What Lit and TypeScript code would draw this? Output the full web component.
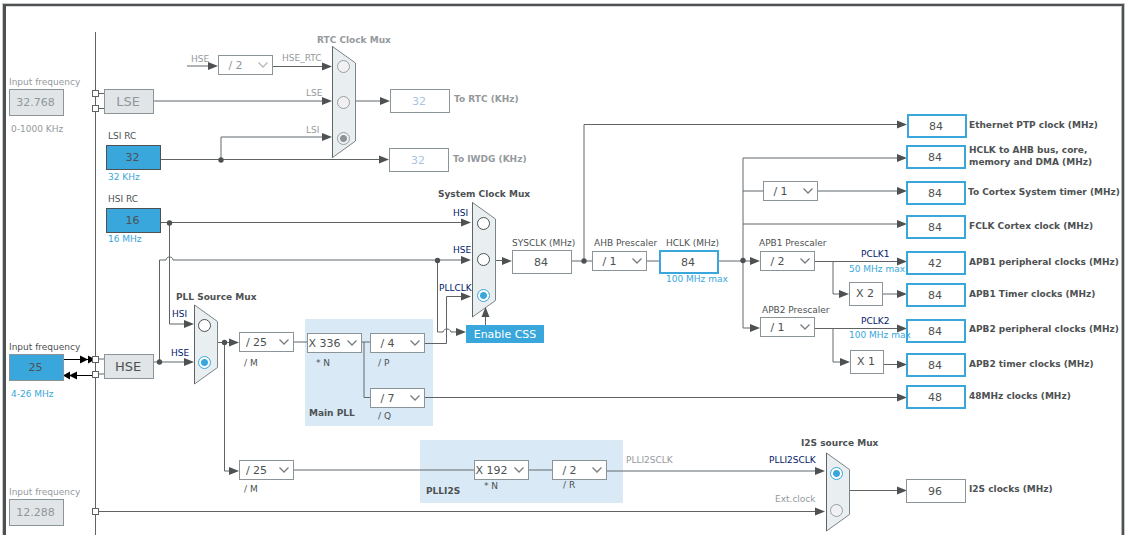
import { LitElement, html, svg, css, nothing } from "lit";
import { customElement } from "lit/decorators.js";
import { styleMap } from "lit/directives/style-map.js";

type Point = [number, number];

interface Field {
  id: string;
  at: Point;
  value: string;
  kind: string;
  off?: boolean;
}

interface Divider {
  id: string;
  at: Point;
  value: string;
  name?: string;
  off?: boolean;
}

interface Caption {
  at: Point;
  text: string;
  kind?: string;
  target?: string;
}

interface Mux {
  name: string;
  x: number;
  top: number;
  bottom: number;
  inputs: { id: string; at: Point; on?: boolean; off?: boolean }[];
}

interface Wire {
  d: string;
  soft?: boolean;
  tip?: Point;
}

const fields: Field[] = [
  { id: "lse-in", at: [9, 89], value: "32.768", kind: "source", off: true },
  { id: "hse-in", at: [9, 354], value: "25", kind: "source live" },
  { id: "i2s-in", at: [9, 499], value: "12.288", kind: "source", off: true },
  { id: "lsi", at: [106, 145], value: "32", kind: "rc" },
  { id: "hsi", at: [106, 208], value: "16", kind: "rc" },
  { id: "rtc", at: [390, 89], value: "32", kind: "plain", off: true },
  { id: "iwdg", at: [389, 148], value: "32", kind: "plain", off: true },
  { id: "sysclk", at: [512, 250], value: "84", kind: "plain" },
  { id: "hclk", at: [659, 250], value: "84", kind: "target" },
  { id: "eth", at: [907, 114], value: "84", kind: "target" },
  { id: "ahb-bus", at: [906, 145], value: "84", kind: "target" },
  { id: "cortex", at: [906, 181], value: "84", kind: "target" },
  { id: "fclk", at: [906, 215], value: "84", kind: "target" },
  { id: "apb1-p", at: [906, 251], value: "42", kind: "target" },
  { id: "apb1-t", at: [906, 283], value: "84", kind: "target" },
  { id: "apb2-p", at: [906, 319], value: "84", kind: "target" },
  { id: "apb2-t", at: [906, 353], value: "84", kind: "target" },
  { id: "usb48", at: [906, 385], value: "48", kind: "target" },
  { id: "i2s", at: [906, 479], value: "96", kind: "plain" },
];

const dividers: Divider[] = [
  { id: "rtc-div", at: [218, 55], value: "/ 2", name: "HSE RTC divider", off: true },
  { id: "pll-m", at: [239, 332], value: "/ 25" },
  { id: "pll-n", at: [307, 333], value: "X 336" },
  { id: "pll-p", at: [370, 333], value: "/ 4" },
  { id: "pll-q", at: [370, 388], value: "/ 7" },
  { id: "i2s-m", at: [239, 460], value: "/ 25" },
  { id: "i2s-n", at: [474, 460], value: "X 192" },
  { id: "i2s-r", at: [552, 460], value: "/ 2" },
  { id: "ahb-div", at: [592, 251], value: "/ 1" },
  { id: "cortex-div", at: [763, 181], value: "/ 1", name: "Cortex prescaler" },
  { id: "apb1-div", at: [760, 251], value: "/ 2" },
  { id: "apb2-div", at: [760, 317], value: "/ 1" },
];

const captions: Caption[] = [
  { at: [9, 76], text: "Input frequency", kind: "faint", target: "lse-in" },
  { at: [11, 123], text: "0-1000 KHz", kind: "faint" },
  { at: [9, 341], text: "Input frequency", target: "hse-in" },
  { at: [11, 388], text: "4-26 MHz", kind: "hint" },
  { at: [9, 486], text: "Input frequency", kind: "faint", target: "i2s-in" },
  { at: [108, 130], text: "LSI RC", target: "lsi" },
  { at: [108, 171], text: "32 KHz", kind: "hint" },
  { at: [108, 193], text: "HSI RC", target: "hsi" },
  { at: [108, 233], text: "16 MHz", kind: "hint" },
  { at: [191, 53], text: "HSE", kind: "faint" },
  { at: [282, 52], text: "HSE_RTC", kind: "faint", target: "rtc-hse" },
  { at: [306, 87], text: "LSE", kind: "faint", target: "rtc-lse" },
  { at: [306, 124], text: "LSI", kind: "faint", target: "rtc-lsi" },
  { at: [317, 34], text: "RTC Clock Mux", kind: "bold faint" },
  { at: [454, 93], text: "To RTC (KHz)", kind: "bold faint", target: "rtc" },
  { at: [453, 153], text: "To IWDG (KHz)", kind: "bold faint", target: "iwdg" },
  { at: [176, 291], text: "PLL Source Mux", kind: "bold" },
  { at: [172, 308], text: "HSI", kind: "signal", target: "pll-hsi" },
  { at: [171, 347], text: "HSE", kind: "signal", target: "pll-hse" },
  { at: [244, 357], text: "/ M", target: "pll-m" },
  { at: [316, 357], text: "* N", target: "pll-n" },
  { at: [378, 357], text: "/ P", target: "pll-p" },
  { at: [378, 410], text: "/ Q", target: "pll-q" },
  { at: [309, 407], text: "Main PLL", kind: "bold" },
  { at: [244, 483], text: "/ M", target: "i2s-m" },
  { at: [484, 480], text: "* N", target: "i2s-n" },
  { at: [563, 479], text: "/ R", target: "i2s-r" },
  { at: [426, 485], text: "PLLI2S", kind: "bold" },
  { at: [626, 454], text: "PLLI2SCLK", kind: "faint" },
  { at: [769, 454], text: "PLLI2SCLK", kind: "signal", target: "i2s-pll" },
  { at: [775, 493], text: "Ext.clock", kind: "faint", target: "i2s-ext" },
  { at: [801, 437], text: "I2S source Mux", kind: "bold" },
  { at: [438, 188], text: "System Clock Mux", kind: "bold" },
  { at: [453, 207], text: "HSI", kind: "signal", target: "sys-hsi" },
  { at: [453, 244], text: "HSE", kind: "signal", target: "sys-hse" },
  { at: [439, 282], text: "PLLCLK", kind: "signal", target: "sys-pll" },
  { at: [512, 237], text: "SYSCLK (MHz)", target: "sysclk" },
  { at: [594, 237], text: "AHB Prescaler", target: "ahb-div" },
  { at: [666, 237], text: "HCLK (MHz)", target: "hclk" },
  { at: [666, 273], text: "100 MHz max", kind: "hint" },
  { at: [759, 237], text: "APB1 Prescaler", target: "apb1-div" },
  { at: [762, 304], text: "APB2 Prescaler", target: "apb2-div" },
  { at: [861, 248], text: "PCLK1", kind: "signal" },
  { at: [849, 263], text: "50 MHz max", kind: "hint" },
  { at: [861, 315], text: "PCLK2", kind: "signal" },
  { at: [849, 329], text: "100 MHz max", kind: "hint" },
  { at: [969, 119], text: "Ethernet PTP clock (MHz)", kind: "bold", target: "eth" },
  { at: [969, 144], text: "HCLK to AHB bus, core,\nmemory and DMA (MHz)", kind: "bold", target: "ahb-bus" },
  { at: [968, 186], text: "To Cortex System timer (MHz)", kind: "bold", target: "cortex" },
  { at: [969, 220], text: "FCLK Cortex clock (MHz)", kind: "bold", target: "fclk" },
  { at: [969, 256], text: "APB1 peripheral clocks (MHz)", kind: "bold", target: "apb1-p" },
  { at: [969, 288], text: "APB1 Timer clocks (MHz)", kind: "bold", target: "apb1-t" },
  { at: [969, 323], text: "APB2 peripheral clocks (MHz)", kind: "bold", target: "apb2-p" },
  { at: [969, 358], text: "APB2 timer clocks (MHz)", kind: "bold", target: "apb2-t" },
  { at: [969, 390], text: "48MHz clocks (MHz)", kind: "bold", target: "usb48" },
  { at: [969, 483], text: "I2S clocks (MHz)", kind: "bold", target: "i2s" },
];

const muxes: Mux[] = [
  {
    name: "rtc-mux", x: 332.5, top: 46.5, bottom: 157.5,
    inputs: [
      { id: "rtc-hse", at: [343, 66], off: true },
      { id: "rtc-lse", at: [343, 102], off: true },
      { id: "rtc-lsi", at: [343, 138], on: true, off: true },
    ],
  },
  {
    name: "pll-mux", x: 194.5, top: 305, bottom: 384,
    inputs: [
      { id: "pll-hsi", at: [204, 325] },
      { id: "pll-hse", at: [204, 362], on: true },
    ],
  },
  {
    name: "sys-mux", x: 472.5, top: 202.5, bottom: 317,
    inputs: [
      { id: "sys-hsi", at: [483, 223] },
      { id: "sys-hse", at: [483, 259] },
      { id: "sys-pll", at: [483, 295], on: true },
    ],
  },
  {
    name: "i2s-mux", x: 826.5, top: 453, bottom: 531,
    inputs: [
      { id: "i2s-pll", at: [836, 473], on: true },
      { id: "i2s-ext", at: [836, 510], off: true },
    ],
  },
];

const wires: Wire[] = [
  { d: "M95.5 32V2000" },
  { d: "M98 93.5H104M98 108.5H104" },
  { d: "M98 359H104M98 374H104", soft: true },
  { d: "M187 66H210", soft: true, tip: [218, 66] },
  { d: "M273 66.5H324", tip: [332, 66.5] },
  { d: "M154 101H324", soft: true, tip: [332, 101] },
  { d: "M221 159V137H324", soft: true, tip: [332, 137] },
  { d: "M161 159.5H382", tip: [389, 159.5] },
  { d: "M356 101H382", soft: true, tip: [390, 101] },
  { d: "M161 222.5H464", tip: [471, 222.5] },
  { d: "M169.5 223V324H186", tip: [194, 324] },
  { d: "M154 362H186", soft: true, tip: [194, 362] },
  { d: "M159.5 362V260" },
  { d: "M159.5 260H166C166 256 173 256 173 260H464", soft: true, tip: [471, 260] },
  { d: "M437.5 260V332H443C444 328 450 328 451 332H457", tip: [466, 332] },
  { d: "M218 342.5H231", tip: [239, 342.5] },
  { d: "M224.5 342V471H231", tip: [239, 471] },
  { d: "M294 342H307M362 342H370M364 342V397.5H370", soft: true },
  { d: "M425 343.5H446.5V296.5H464", tip: [471, 296.5] },
  { d: "M425 397.5H899", tip: [907, 397.5] },
  { d: "M294 470H474M529 470H552M607 471H818", soft: true, tip: [825, 471] },
  { d: "M98 511.5H818", tip: [825, 511.5] },
  { d: "M850 490.5H899", tip: [907, 490.5] },
  { d: "M496 260.5H505", tip: [512, 261] },
  { d: "M572 261H592M584 261V124.5M647 261H659M719 261H752", soft: true, tip: [760, 261] },
  { d: "M584 124.5H899", tip: [907, 124.5] },
  { d: "M743 158H899", soft: true, tip: [907, 158] },
  { d: "M743 191H763M818 191H899", soft: true, tip: [907, 191] },
  { d: "M743 224H899", soft: true, tip: [907, 224] },
  { d: "M743 158V328H752", soft: true, tip: [760, 328] },
  { d: "M815 261.5H899", tip: [907, 261.5] },
  { d: "M833 261V294H841", soft: true, tip: [849, 294] },
  { d: "M883 294H899", soft: true, tip: [907, 294] },
  { d: "M815 328.5H899", tip: [907, 328.5] },
  { d: "M833 328V362H842", soft: true, tip: [850, 362] },
  { d: "M884 364.5H899", tip: [907, 364.5] },
];

const joints: Point[] = [
  [221, 160], [169.5, 223], [159.5, 362], [224.5, 342.5],
  [437.5, 260.5], [584, 261], [743, 260.5],
];

const pins: number[] = [90.5, 105.5, 356.5, 371.5, 508.5];

const place = ([x, y]: Point) => styleMap({ left: `${x}px`, top: `${y}px` });

@customElement("app-root")
export class AppRoot extends LitElement {
  static styles = css`
    :host {
      display: block;
      font-family: "DejaVu Sans", sans-serif;
      font-size: 9px;
      line-height: 12px;
      color: #4d5152;
    }
    .page {
      position: relative;
      box-sizing: border-box;
      min-height: 100vh;
      display: flex;
      padding: 4px 3px 0;
      overflow: hidden;
      background: #fff;
    }
    .frame {
      flex: 1;
      border: 2px solid #4d5152;
      border-left-width: 3px;
      border-bottom: 0;
      box-shadow: 0 0 0 1px #c6c8c9, inset 0 1px #d5d7d8, inset -1px 0 #b4b6b7;
    }
    .clock-tree {
      position: absolute;
      inset: 0;
    }
    .wires {
      position: absolute;
      width: 100%;
      height: 100%;
    }
    .wire {
      fill: none;
      stroke: #5f6364;
    }
    .soft {
      stroke: #63696c;
    }
    .head {
      fill: #4d5152;
    }
    .ext {
      fill: #000;
      stroke: none;
    }
    .ext-line {
      stroke: #000;
    }
    .pin {
      fill: #fff;
      stroke: #5f6364;
    }
    .mux {
      fill: #e9eef1;
      stroke: #7b8488;
    }
    .mux-edge {
      stroke: #5f6364;
    }
    .area {
      position: absolute;
      border-radius: 1px;
      background: #d9e9f6;
    }
    .main-pll {
      width: 128px;
      height: 107px;
    }
    .i2s-pll {
      width: 203px;
      height: 63px;
    }
    .caption {
      position: absolute;
      white-space: pre;
    }
    .faint {
      color: #95999d;
    }
    .hint {
      color: #39a7dc;
    }
    .signal {
      color: #00196b;
    }
    .bold {
      font-weight: bold;
    }
    .field,
    .factor,
    .block {
      position: absolute;
      box-sizing: border-box;
      margin: 0;
      padding: 0 2px 0 0;
      width: 60px;
      height: 24px;
      border: 1px solid #8b9499;
      border-radius: 0;
      background: #fff;
      color: #4d5152;
      font: 11px "DejaVu Sans", sans-serif;
      text-align: center;
    }
    .field:disabled {
      color: #a8c4e2;
    }
    .target {
      border: 2px solid #39a7dc;
    }
    .source {
      width: 55px;
      height: 27px;
      background: #e1e5e8;
    }
    .source:disabled {
      color: #8f979c;
    }
    .live {
      background: #39a7dc;
    }
    .rc {
      width: 55px;
      height: 25px;
      border-color: #4d5152;
      background: #39a7dc;
    }
    .factor {
      width: 34px;
      line-height: 22px;
    }
    .block {
      width: 50px;
      height: 25px;
      background: #e1e5e8;
      font-size: 13px;
      line-height: 23px;
    }
    .block.faint {
      color: #8f979c;
    }
    .divider {
      position: absolute;
      width: 55px;
      height: 20px;
    }
    .select {
      appearance: none;
      box-sizing: border-box;
      width: 100%;
      height: 100%;
      margin: 0;
      padding: 0 20px 0 0;
      border: 1px solid #8b9499;
      border-radius: 0;
      background: #fff;
      color: #4d5152;
      font: 11px "DejaVu Sans", sans-serif;
      text-align: center;
      text-align-last: center;
      opacity: 1;
    }
    .select:disabled {
      color: #8f979c;
    }
    .chevron {
      position: absolute;
      right: 5px;
      top: 7px;
      width: 10px;
      height: 6px;
      fill: none;
      stroke: #777d80;
      stroke-width: 1.3;
      pointer-events: none;
    }
    .chevron.dim {
      stroke: #b4b9bc;
    }
    .radio {
      appearance: none;
      position: absolute;
      box-sizing: border-box;
      width: 13px;
      height: 13px;
      margin: -6px 0 0 -6px;
      border: 1px solid #4d5152;
      border-radius: 50%;
      background: #fff;
    }
    .radio:checked {
      border-color: #39a7dc;
      background: radial-gradient(circle, #39a7dc 3px, #fff 4px);
    }
    .radio:disabled {
      border-color: #9a9fa2;
      background: #f1f1f3;
    }
    .radio:disabled:checked {
      background: radial-gradient(circle, #8b9499 3px, #f1f1f3 4px);
    }
    .css-button {
      position: absolute;
      width: 78px;
      height: 18px;
      padding: 0;
      border: 0;
      background: #39a7dc;
      color: #fff;
      font: 11px "DejaVu Sans", sans-serif;
      text-align: center;
    }
  `;

  private wire(w: Wire) {
    return svg`
      <path class="wire ${w.soft ? "soft" : ""}" d=${w.d}></path>
      ${w.tip
        ? svg`<path class="head" d="M${w.tip[0]} ${w.tip[1]}l-10 -4v8z"></path>`
        : nothing}
    `;
  }

  private muxShape(m: Mux) {
    const right = m.x + 23;
    return svg`
      <path class="mux" d="M${m.x} ${m.top}L${right} ${m.top + 16.5}V${m.bottom - 16.5}L${m.x} ${m.bottom}z"></path>
      <path class="mux-edge" d="M${m.x} ${m.top}V${m.bottom}"></path>
    `;
  }

  private divider(d: Divider) {
    return html`
      <div class="divider" style=${place(d.at)}>
        <select class="select" id=${d.id} aria-label=${d.name ?? nothing} ?disabled=${d.off}>
          <option>${d.value}</option>
        </select>
        <svg class="chevron ${d.off ? "dim" : ""}" viewBox="0 0 10 6">
          <path d="M.5 .5L5 5L9.5 .5"></path>
        </svg>
      </div>
    `;
  }

  private caption(c: Caption) {
    const cls = `caption ${c.kind ?? ""}`;
    return c.target
      ? html`<label class=${cls} for=${c.target} style=${place(c.at)}>${c.text}</label>`
      : html`<span class=${cls} style=${place(c.at)}>${c.text}</span>`;
  }

  render() {
    return html`
      <main class="page">
        <div class="frame"></div>
        <div class="clock-tree">
          <div class="area main-pll" style=${place([305, 319])}></div>
          <div class="area i2s-pll" style=${place([420, 440])}></div>
          <svg class="wires" aria-hidden="true">
            ${wires.map((w) => this.wire(w))}
            ${muxes.map((m) => this.muxShape(m))}
            <path class="ext-line" d="M64 359.5H92M64 375.5H92"></path>
            <path class="ext" d="M88 359.5l-8 -4v8zM95 359.5l-7 -4v8zM63 375.5l7 -4v8zM69 375.5l8 -4v8z"></path>
            <path class="wire" d="M485.5 325V315"></path>
            <path class="head" d="M485.5 307l-4 10h8z"></path>
            ${joints.map(([x, y]) => svg`<circle class="head" cx=${x} cy=${y} r="2.7"></circle>`)}
            ${pins.map((y) => svg`<rect class="pin" x="92.5" y=${y} width="6" height="6"></rect>`)}
          </svg>
          ${fields.map((f) => html`
            <input class="field ${f.kind}" id=${f.id} style=${place(f.at)} .value=${f.value}
              ?disabled=${f.off} ?readonly=${f.kind === "rc"} />
          `)}
          <div class="block faint" style=${place([104, 89])}>LSE</div>
          <div class="block" style=${place([104, 354])}>HSE</div>
          <div class="factor" style=${place([849, 282])}>X 2</div>
          <div class="factor" style=${place([850, 350])}>X 1</div>
          ${dividers.map((d) => this.divider(d))}
          ${muxes.map((m) => m.inputs.map((i) => html`
            <input class="radio" type="radio" id=${i.id} name=${m.name} style=${place(i.at)}
              ?checked=${i.on} ?disabled=${i.off} />
          `))}
          <button class="css-button" style=${place([466, 325])}>Enable CSS</button>
          ${captions.map((c) => this.caption(c))}
        </div>
      </main>
    `;
  }
}
